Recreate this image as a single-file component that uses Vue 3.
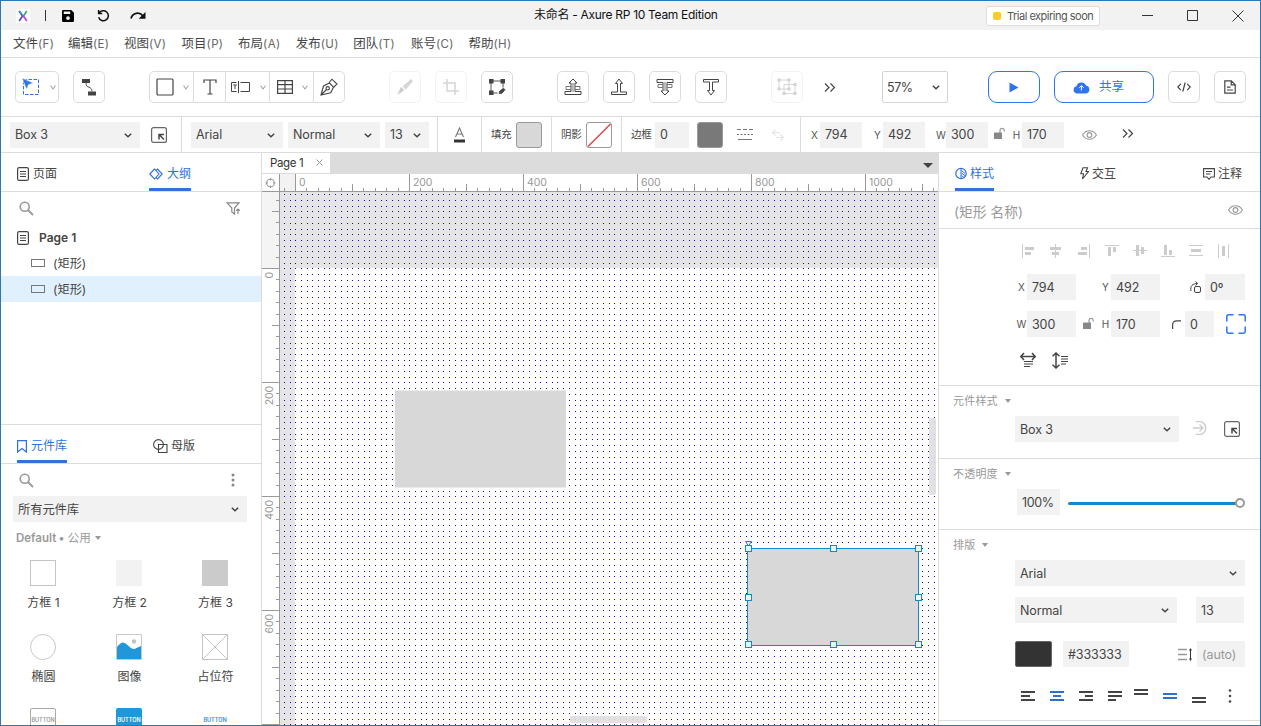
<script setup>
const menus = ['文件(F)', '编辑(E)', '视图(V)', '项目(P)', '布局(A)', '发布(U)', '团队(T)', '账号(C)', '帮助(H)']

const S = 0.57
const range = (a, b) => Array.from({ length: b - a + 1 }, (_, i) => a + i)

// Snap grid: one pixel dot every 10 units at 57% zoom.
const dotX = range(-2, 112).map(i => Math.round(15.2 + i * 5.7))
const dotY = range(-13, 80).map(i => Math.floor(76.9 + i * 5.7))
const dots = dotY.flatMap(y => dotX.map(x => `M${x} ${y}h1v1h-1z`)).join('')

// Ruler ticks: small every 20 units, medium every 100, full every 200.
const tickLen = u => (u % 200 === 0 ? 17 : u % 100 === 0 ? 7 : 3)
const hTicks = range(-1, 56).map(i => ({ u: i * 20, p: Math.round(33 + i * 20 * S), n: tickLen(i * 20) }))
const vTicks = range(-6, 40).map(i => ({ u: i * 20, p: Math.round(76 + i * 20 * S), n: tickLen(i * 20) }))
const hLabels = [0, 200, 400, 600, 800, 1000].map(u => ({ u, p: 37 + u * S }))
const vLabels = [0, 200, 400, 600].map(u => ({ u, p: 80 + u * S }))

const handles = [[0, 0], [85, 0], [170, 0], [0, 49], [170, 49], [0, 96], [85, 96], [170, 96]]
</script>

<template>
  <div class="window">
    <header class="titlebar">
      <div class="logo">
        <svg width="14" height="14" viewBox="0 0 14 14" fill="none" stroke-width="1.8">
          <path d="M3.2 2l3.4 5-3.4 5" stroke="#5a4fd0" /><path d="M10.8 2L7.4 7" stroke="#3fae7a" /><path d="M7.4 7l3.4 5" stroke="#c246c4" /><path d="M3.2 2l2 3" stroke="#3d8fe0" />
        </svg>
      </div>
      <i class="tsep"></i>
      <svg class="t-save" width="12" height="12" viewBox="0 0 12 12"><path fill="#000" fill-rule="evenodd" d="M1.2 0h8L12 2.8v8q0 1.2-1.2 1.2H1.2Q0 12 0 10.800V1.200Q0 0 1.200 0zM1.700 1.500v2.500h6.500V1.500zM6 6.200a1.900 1.900 0 100 3.800 1.900 1.900 0 000-3.800z" /></svg>
      <svg class="t-undo" width="13" height="13" viewBox="0 0 13 13" fill="none" stroke="#111" stroke-width="1.500"><path d="M1.600 1v3.600h3.600M1.900 4.400a5 5 0 11-.3 3.900" /></svg>
      <svg class="t-redo" width="16" height="9" viewBox="0 0 16 9"><path fill="none" stroke="#111" stroke-width="1.800" d="M1 7.500C2.500 1.500 9.500.5 13 5" /><path fill="#111" d="M15.500 1v6.800H8.700z" /></svg>
      <h1>未命名 - Axure RP 10 Team Edition</h1>
      <div class="trial"><i></i>Trial expiring soon</div>
      <svg class="t-min" width="11" height="11" viewBox="0 0 11 11"><path d="M0 5.500h11" stroke="#333" /></svg>
      <svg class="t-max" width="11" height="11" viewBox="0 0 11 11"><path d="M.5.5h10v10H.5z" fill="none" stroke="#333" /></svg>
      <svg class="t-close" width="12" height="12" viewBox="0 0 12 12"><path d="M.5.5l11 11M11.500.5l-11 11" stroke="#333" /></svg>
    </header>

    <nav class="menubar"><span v-for="m in menus" :key="m">{{ m.slice(0, 2) }}<b>{{ m.slice(2) }}</b></span></nav>

    <div class="toolbar">
      <div class="btn wide">
        <svg width="18" height="18" viewBox="0 0 18 18"><path d="M1.500 1.500h15v15h-15z" fill="none" stroke="#2f74ee" stroke-dasharray="3.500 1.500" /><path d="M0 0l11.500 5-5 1.700-2 4.800z" fill="#2f74ee" stroke="#fff" stroke-width=".6" /></svg>
        <svg class="car" width="6" height="5" viewBox="0 0 6 5"><path d="M.5 .5L3 4 5.500 .5" /></svg>
      </div>
      <div class="btn g14">
        <svg width="16" height="17" viewBox="0 0 16 17"><path fill="#444" d="M1 0h8v4H1zM7 12.500h8v4H7z" /><path d="M5 4c0 6 6 2.500 6 8.500" fill="none" stroke="#555" /></svg>
      </div>
      <div class="group">
        <div class="c44"><svg width="18" height="18" viewBox="0 0 18 18"><rect x="1" y="1" width="16" height="16" rx="1" fill="none" stroke="#444" stroke-width="1.200" /></svg><svg class="car" width="6" height="5" viewBox="0 0 6 5"><path d="M.5 .5L3 4 5.500 .5" /></svg></div>
        <div class="c32"><svg width="14" height="16" viewBox="0 0 14 16"><path d="M1 4V1h12v3M7 1v14M4.500 15h5" fill="none" stroke="#444" stroke-width="1.200" /></svg></div>
        <div class="c44"><svg width="20" height="14" viewBox="0 0 20 14"><path d="M5.500 2.500h-5v9h5M2.300 5h3.500M4 5v4M7.500 1v12M9.500 2.500h9v9h-9" fill="none" stroke="#444" /></svg><svg class="car" width="6" height="5" viewBox="0 0 6 5"><path d="M.5 .5L3 4 5.500 .5" /></svg></div>
        <div class="c44"><svg width="16" height="14" viewBox="0 0 16 14"><path d="M.6.6h14.800v12.800H.6zM.6 4.700h14.800M.6 9h14.800M8 .6v12.800" fill="none" stroke="#444" stroke-width="1.200" /></svg><svg class="car" width="6" height="5" viewBox="0 0 6 5"><path d="M.5 .5L3 4 5.500 .5" /></svg></div>
        <div class="c30"><svg width="18" height="18" viewBox="0 0 18 18" fill="none" stroke="#444" stroke-width="1.100"><path d="M1 17L3.500 8l6-3 4 4-2.800 5.700zM1 17l5.500-5.500M9.200 4.500L12 1.200 17 6l-3.300 3.300" /><circle cx="7.700" cy="10.300" r="1.700" /></svg></div>
      </div>
      <div class="btn faint g44"><svg width="18" height="18" viewBox="0 0 18 18"><path fill="#bbb" d="M1 17l4-8 3 3zM6.500 8.500L15 1l2 2-7 8.500z" /><path d="M5 9l3 3-5 4z" fill="#aaa" /></svg></div>
      <div class="btn faint g14"><svg width="16" height="16" viewBox="0 0 16 16"><path fill="none" stroke="#bbb" stroke-width="1.500" d="M4 0v12h12M0 4h12v12" /></svg></div>
      <div class="btn g14"><svg width="18" height="18" viewBox="0 0 18 18"><path d="M3 3h12v12H3z" fill="none" stroke="#555" /><path fill="#444" d="M1 1h4.500v4.500H1zM12.500 1H17v4.500h-4.500zM1 12.500h4.500V17H1z" /><path d="M9.500 18v-5l4-3.500h4V15l-3 3z" fill="#fff" /><path d="M11 15.500l.8-2.500 3.700-2.800 1.500 1.500-3 3.600z" fill="#444" stroke="#444" stroke-width=".8" /></svg></div>
      <div class="btn g44"><svg width="18" height="18" viewBox="0 0 18 18" fill="none" stroke="#444"><path d="M1 16.500v-3h6V5H5L9 1l4 4h-2v8.500h6v3z" /><path d="M7 8.500H2v3h5M11 8.500h5v3h-5M9 5v9" stroke="#777" /></svg></div>
      <div class="btn g14"><svg width="18" height="18" viewBox="0 0 18 18" fill="none" stroke="#444"><path d="M1.500 16.500v-2.500h6V5.500H5.500L9 1l3.500 4.500h-2V14h6v2.500z" /></svg></div>
      <div class="btn g14"><svg width="18" height="18" viewBox="0 0 18 18" fill="none" stroke="#444"><path d="M1 1.500v3h6V13H5l4 4 4-4h-2V4.500h6v-3z" /><path d="M7 6.500H2v3h5M11 6.500h5v3h-5M9 4v9" stroke="#777" /></svg></div>
      <div class="btn g14"><svg width="18" height="18" viewBox="0 0 18 18" fill="none" stroke="#444"><path d="M1.500 1.500V4h6v8.500h-2L9 17l3.500-4.500h-2V4h6V1.500z" /></svg></div>
      <div class="btn faint g44"><svg width="20" height="18" viewBox="0 0 20 18"><path d="M2 2h10v9H2zM7 6.500h11v9H7z" fill="none" stroke="#bbb" /><path fill="#b5b5b5" d="M.5.500h3v3h-3zM10.500.500h3v3h-3zM.5 9.500h3v3h-3zM16.500 5h3v3h-3zM5.500 14h3v3h-3zM16.500 14h3v3h-3zM10.500 9.500h3v3h-3z" /></svg></div>
      <svg class="more" width="12" height="9" viewBox="0 0 12 9"><path d="M1 .5l4 4-4 4M6.500 .5l4 4-4 4" /></svg>
      <div class="zoom">57%<svg class="chev" width="8" height="5" viewBox="0 0 8 5"><path d="M.8 .8L4 3.800 7.200 .8" /></svg></div>
      <div class="btn blue play"><svg width="10" height="11" viewBox="0 0 10 11"><path d="M.5.500l9 5-9 5z" fill="#2f74ee" /></svg></div>
      <div class="btn blue share"><svg width="17" height="13" viewBox="0 0 17 13"><path d="M4 12.500a3.700 3.700 0 01-.5-7.300A5 5 0 0113 4.600a4 4 0 010 7.900z" fill="#2f74ee" /><path d="M8.400 9.500V5M6.200 6.800L8.400 4.600l2.200 2.200" fill="none" stroke="#fff" /></svg><span>共享</span></div>
      <div class="btn g14"><svg width="14" height="10" viewBox="0 0 14 10" fill="none" stroke="#444" stroke-width="1.200"><path d="M3.800 1.800L.8 5l3 3.200M10.200 1.800l3 3.200-3 3.200M8.200.5L5.800 9.500" /></svg></div>
      <div class="btn g14"><svg width="12" height="14" viewBox="0 0 12 14" fill="none" stroke="#444" stroke-width="1.200"><path d="M.8.800h6.500l3.900 3.900v8.500H.8zM7.200.8v4h4M3 7.200h3.500M3 10h6" /></svg></div>
    </div>

    <div class="stylebar">
      <div class="fld s1">Box 3<svg class="chev" width="8" height="5" viewBox="0 0 8 5"><path d="M.8 .8L4 3.800 7.200 .8" /></svg></div>
      <svg class="g11" width="16" height="16" viewBox="0 0 16 16"><rect x=".6" y=".6" width="14.800" height="14.800" rx="2" fill="none" stroke="#666" stroke-width="1.200" /><path d="M8 12.500V7.500h5M8.300 7.800l4.700 4.700" fill="none" stroke="#444" stroke-width="1.500" /></svg>
      <i class="vs g14"></i>
      <div class="fld s2">Arial<svg class="chev" width="8" height="5" viewBox="0 0 8 5"><path d="M.8 .8L4 3.800 7.200 .8" /></svg></div>
      <div class="fld s3">Normal<svg class="chev" width="8" height="5" viewBox="0 0 8 5"><path d="M.8 .8L4 3.800 7.200 .8" /></svg></div>
      <div class="fld s4">13<svg class="chev" width="8" height="5" viewBox="0 0 8 5"><path d="M.8 .8L4 3.800 7.200 .8" /></svg></div>
      <i class="vs g8"></i>
      <svg class="g15" width="13" height="16" viewBox="0 0 13 16"><path d="M2.500 10L6.500 1l4 9M4 7h5" fill="none" stroke="#777" stroke-width="1.100" /><path d="M1 12.500h11v3H1z" fill="#333" /></svg>
      <i class="vs g15"></i>
      <span class="lab">填充</span><i class="sw fill"></i>
      <i class="vs g9"></i>
      <span class="lab">阴影</span><i class="sw shade"><svg width="24" height="24" viewBox="0 0 24 24"><path d="M1 23.500L23.500 1" fill="none" stroke="#e23b3b" stroke-width="1.200" /></svg></i>
      <i class="vs g9"></i>
      <span class="lab">边框</span><div class="fld s5">0</div><i class="sw line"></i>
      <svg class="g14" width="16" height="13" viewBox="0 0 16 13" stroke="#777" fill="none"><path d="M0 1.500h16" stroke-dasharray="4 2" /><path d="M0 6.500h16" stroke-dasharray="2 1.500" /><path d="M1 11.500h14" /></svg>
      <svg class="arr" width="12" height="12" viewBox="0 0 12 12" fill="none" stroke="#e4e4e4" stroke-width="1.200"><path d="M3.500 .5l-3 3 3 3M.5 3.500H8M8.500 5.500l3 3-3 3M11.500 8.500H4" /></svg>
      <i class="vs g16"></i>
      <span class="ax a1">X</span><div class="fld n">794</div>
      <span class="ax a2">Y</span><div class="fld n">492</div>
      <span class="ax a3">W</span><div class="fld n">300</div>
      <svg class="lock" width="11" height="12" viewBox="0 0 11 12"><path d="M0 5.500h8V12H0z" fill="#888" /><path d="M6 6V3.200a2.200 2.200 0 014.300 0V4.500" fill="none" stroke="#999" stroke-width="1.200" /></svg>
      <span class="ax a4">H</span><div class="fld n">170</div>
      <svg class="eye1" width="15" height="10" viewBox="0 0 15 10" fill="none" stroke="#999" stroke-width="1.100"><path d="M.6 5C3.800-.6 11.200-.6 14.400 5 11.200 10.600 3.800 10.600.6 5z" /><circle cx="7.500" cy="5" r="2.400" /></svg>
      <svg class="more2" width="12" height="9" viewBox="0 0 12 9"><path d="M1 .5l4 4-4 4M6.500 .5l4 4-4 4" /></svg>
    </div>

    <main class="body">
      <aside class="left">
        <div class="tabs outline-tabs">
          <div class="tab"><svg width="12" height="14" viewBox="0 0 12 14" fill="none" stroke="#444"><rect x=".6" y=".6" width="10.800" height="12.800" rx="1.500" stroke-width="1.200" /><path d="M3 4.500h6M3 7h6M3 9.500h6" /></svg>页面</div>
          <div class="tab on t2"><svg width="14" height="12" viewBox="0 0 14 12" fill="none" stroke="#2f6fe0" stroke-width="1.100"><path d="M5.500 1L.8 6l4.700 5L10 6zM7 2.300L8.500 1 13.200 6l-4.700 5L7 9.700" /></svg>大纲</div>
        </div>
        <div class="tools">
          <svg width="15" height="15" viewBox="0 0 15 15" fill="none" stroke="#999"><circle cx="5.700" cy="5.700" r="4.500" stroke-width="1.600" /><path d="M9 9l5 5" stroke-width="1.800" /></svg>
          <svg width="15" height="13" viewBox="0 0 15 13" fill="none" stroke="#888" stroke-width="1.200"><path d="M1 .8h12L8.500 6v6L5.800 10V6zM12 12V7M10.200 8.700L12 7l1.800 1.700" /></svg>
        </div>
        <div class="tree">
          <div class="node root"><svg width="12" height="14" viewBox="0 0 12 14" fill="none" stroke="#444"><rect x=".6" y=".6" width="10.800" height="12.800" rx="1.500" stroke-width="1.200" /><path d="M3 4.500h6M3 7h6M3 9.500h6" /></svg>Page 1</div>
          <div class="node"><i></i><span>(矩形)</span></div>
          <div class="node sel"><i></i><span>(矩形)</span></div>
        </div>
        <div class="tabs lib-tabs">
          <div class="tab on"><svg width="10" height="13" viewBox="0 0 10 13" fill="none" stroke="#2f6fe0" stroke-width="1.200"><path d="M.6.600h8.800v11.400L5 8.500.6 12z" /></svg>元件库</div>
          <div class="tab t3"><svg width="15" height="14" viewBox="0 0 15 14" fill="none" stroke="#444" stroke-width="1.100"><circle cx="5.500" cy="5.500" r="4.900" /><path d="M5.500 5.500h8.500v8H5.500z" /></svg>母版</div>
        </div>
        <div class="tools libtools">
          <svg width="15" height="15" viewBox="0 0 15 15" fill="none" stroke="#999"><circle cx="5.700" cy="5.700" r="4.500" stroke-width="1.600" /><path d="M9 9l5 5" stroke-width="1.800" /></svg>
          <svg class="dots3" width="4" height="14" viewBox="0 0 4 14" fill="#888"><circle cx="2" cy="2" r="1.500" /><circle cx="2" cy="7" r="1.500" /><circle cx="2" cy="12" r="1.500" /></svg>
        </div>
        <div class="fld libsel">所有元件库<svg class="chev" width="8" height="5" viewBox="0 0 8 5"><path d="M.8 .8L4 3.800 7.200 .8" /></svg></div>
        <div class="cat"><b>Default</b><em>•</em><span>公用</span><i class="tri"></i></div>
        <div class="lib">
          <div><i class="w box1"></i>方框 1</div>
          <div><i class="w box2"></i>方框 2</div>
          <div><i class="w box3"></i>方框 3</div>
          <div><i class="w oval"></i>椭圆</div>
          <div><svg class="w" viewBox="0 0 26 26"><path d="M.5.500h25v25H.5z" fill="#fff" stroke="#c8c8c8" /><path d="M1 13Q4.500 8.500 7 8.500q2 0 5 3 4 4 6.500 3.500 3-1.500 6.500-3V25H1z" fill="#2196d8" /><circle cx="18" cy="7.500" r="2.200" fill="#c4c4c4" /></svg>图像</div>
          <div><svg class="w" viewBox="0 0 26 26"><path d="M.5.500h25v25H.5zM.5.500l25 25M25.500.500l-25 25" fill="#fff" stroke="#c4c4c4" /></svg>占位符</div>
          <div><i class="w b b1">BUTTON</i></div>
          <div><i class="w b b2">BUTTON</i></div>
          <div><i class="w b b3">BUTTON</i></div>
        </div>
      </aside>

      <section class="center">
        <div class="pagetabs">
          <div class="ptab">Page 1<svg width="7" height="7" viewBox="0 0 7 7"><path d="M.5.500l6 6M6.500.500l-6 6" stroke="#999" /></svg></div>
          <i class="drop"></i>
        </div>
        <div class="hruler">
          <svg width="676" height="18" viewBox="0 0 676 18">
            <path d="M18 0h15v17H18z" fill="#f2f2f2" />
            <g fill="none" stroke="#999"><circle cx="8.500" cy="9" r="4" /><path d="M8.500 4v2.500M8.500 11.500V14M3.500 9H6M11 9h2.500" /></g>
            <path v-for="t in hTicks" :key="t.u" :d="`M${t.p + .5} 17v-${t.n}`" stroke="#999" />
            <path d="M0 17.500h676M17.500 0v18" stroke="#999" />
            <text v-for="l in hLabels" :key="l.u" :x="l.p" y="11.500">{{ l.u }}</text>
          </svg>
        </div>
        <div class="work">
          <svg class="vruler" width="18" height="533" viewBox="0 0 18 533">
            <path d="M0 0h17v76H0z" fill="#f4f4f4" />
            <path v-for="t in vTicks" :key="t.u" :d="`M17 ${t.p + .5}h-${t.n}`" stroke="#999" />
            <path d="M17.500 0v533" stroke="#999" />
            <text v-for="l in vLabels" :key="l.u" :transform="`translate(11 ${l.p}) rotate(-90)`" text-anchor="end">{{ l.u }}</text>
          </svg>
          <div class="canvas">
            <svg width="658" height="533" viewBox="0 0 658 533">
              <path d="M0 0h658v76H15v457H0z" fill="#e5e5e8" />
              <path :d="dots" fill="#12128e" shape-rendering="crispEdges" />
              <path d="M115 198.500h171v97H115z" fill="#d8d8d8" />
              <path d="M467.500 356.500h171v97h-171z" fill="#d8d8d8" stroke="#1489c8" />
              <path d="M465.500 349.500h6L468.500 354z" fill="#e6f6ff" stroke="#1489c8" />
              <rect v-for="(h, i) in handles" :key="i" :x="465.500 + h[0]" :y="353.500 + h[1]" width="6" height="6" fill="#e6f9ff" stroke="#1489c8" />
              <rect x="649" y="226" width="7" height="77" rx="2" fill="#dedee0" fill-opacity=".9" />
              <rect x="290" y="524" width="77" height="7" rx="2" fill="#dedee0" fill-opacity=".9" />
            </svg>
          </div>
        </div>
      </section>

      <aside class="right">
        <div class="tabs right-tabs">
          <div class="tab on"><svg width="12" height="13" viewBox="0 0 12 13" fill="none" stroke="#2f6fe0"><circle cx="6" cy="6.500" r="5.200" stroke-width="1.200" /><path d="M6 1v11M6.500 3.500l3.500 3M6.500 6l4 3M6.500 8.500l2.500 2" /></svg>样式</div>
          <div class="tab r2"><svg width="9" height="13" viewBox="0 0 9 13" fill="none" stroke="#444" stroke-width="1.100"><path d="M3 .8h4.500L6 4.500h2.400L2.500 12l1-5.200H.8z" /></svg>交互</div>
          <div class="tab r3"><svg width="12" height="12" viewBox="0 0 12 12" fill="none" stroke="#444" stroke-width="1.100"><path d="M.6.600h10.800v8.400H8l-2 2.300L4 9H.6zM3 3.500h6M3 6h4.500" /></svg>注释</div>
        </div>
        <div class="name">(矩形 名称)<svg width="15" height="10" viewBox="0 0 15 10" fill="none" stroke="#999" stroke-width="1.100"><path d="M.6 5C3.800-.6 11.200-.6 14.400 5 11.200 10.600 3.800 10.600.6 5z" /><circle cx="7.500" cy="5" r="2.400" /></svg></div>

        <div class="geo">
          <div class="aligns">
            <svg viewBox="0 0 14 14"><path d="M1.500 0v14" /><path class="f" d="M4 3h9v3H4zM4 8h6v3H4z" /></svg>
            <svg viewBox="0 0 14 14"><path d="M6.500 0v14" /><path class="f" d="M1 3h11v3H1zM3 8h7v3H3z" /></svg>
            <svg viewBox="0 0 14 14"><path d="M12.500 0v14" /><path class="f" d="M4 3h6v3H4zM1 8h9v3H1z" /></svg>
            <svg viewBox="0 0 14 14"><path d="M0 1.500h14" /><path class="f" d="M3 3h3v9H3zM8 3h3v5H8z" /></svg>
            <svg viewBox="0 0 14 14"><path d="M0 6.500h14" /><path class="f" d="M3 1h3v11H3zM8 3h3v7H8z" /></svg>
            <svg viewBox="0 0 14 14"><path d="M0 12.500h14" /><path class="f" d="M3 1h3v10H3zM8 6h3v5H8z" /></svg>
            <svg viewBox="0 0 14 14"><path d="M0 1.500h14M0 11.500h14" /><path class="f" d="M2 5h10v3H2z" /></svg>
            <svg viewBox="0 0 14 14"><path d="M1.500 0v14M11.500 0v14" /><path class="f" d="M5 2h3v10H5z" /></svg>
          </div>
          <div class="row">
            <span class="ax">X</span><div class="fld p">794</div>
            <span class="ax yy">Y</span><div class="fld p">492</div>
            <svg class="rot" width="12" height="12" viewBox="0 0 12 12" fill="none" stroke="#444"><rect x="4.500" y="5.500" width="6" height="6" rx="1.500" /><path d="M1 10C0 5 2.500 2.500 7.500 2.500M5.500 .5l2.200 2-2.200 2" /></svg>
            <div class="fld ang">0º</div>
          </div>
          <div class="row">
            <span class="ax">W</span><div class="fld p">300</div>
            <svg class="lock2" width="11" height="12" viewBox="0 0 11 12"><path d="M0 5.500h8V12H0z" fill="#888" /><path d="M6 6V3.200a2.200 2.200 0 014.300 0V4.500" fill="none" stroke="#999" stroke-width="1.200" /></svg>
            <span class="ax hh">H</span><div class="fld p">170</div>
            <svg class="rad" width="9" height="9" viewBox="0 0 9 9"><path d="M.6 9V5Q.6.800 5 .8h4" fill="none" stroke="#444" stroke-width="1.200" /></svg>
            <div class="fld r0">0</div>
            <svg class="corners" width="20" height="20" viewBox="0 0 20 20" fill="none" stroke="#2f74ee" stroke-width="1.500"><path d="M.8 7.500V2.500Q.8.800 2.500.8h5M12.500.8h5q1.700 0 1.700 1.700v5M19.200 12.500v5q0 1.700-1.700 1.700h-5M7.500 19.200h-5Q.8 19.200.8 17.500v-5" /></svg>
          </div>
          <div class="fits">
            <svg width="16" height="16" viewBox="0 0 16 16" fill="none" stroke="#444"><path d="M1 4.500h14M4 1L.8 4.500 4 8M12 1l3.200 3.500L12 8" stroke-width="1.500" /><path d="M4 9.500h9M4 12h9M4 14.500h6" /></svg>
            <svg width="16" height="17" viewBox="0 0 16 17" fill="none" stroke="#444"><path d="M4 1v15M.5 4.200L4 1l3.500 3.200M.5 12.800L4 16l3.500-3.200" stroke-width="1.500" /><path d="M9 4.500h7M9 7h7M9 9.500h7M9 12h5" /></svg>
          </div>
        </div>

        <div class="sec stylesec">
          <div class="sh">元件样式<i class="tri"></i></div>
          <div class="row">
            <div class="fld bx">Box 3<svg class="chev" width="8" height="5" viewBox="0 0 8 5"><path d="M.8 .8L4 3.800 7.200 .8" /></svg></div>
            <svg class="upd" width="15" height="16" viewBox="0 0 15 16" fill="none" stroke="#ccc" stroke-width="1.300"><path d="M3 2.200A6.600 6.600 0 113 13.800M0 8h10M6.500 4.500L10 8l-3.500 3.500" /></svg>
            <svg class="mng" width="16" height="16" viewBox="0 0 16 16"><rect x=".6" y=".6" width="14.800" height="14.800" rx="2" fill="none" stroke="#666" stroke-width="1.200" /><path d="M8 12.500V7.500h5M8.300 7.800l4.700 4.700" fill="none" stroke="#444" stroke-width="1.500" /></svg>
          </div>
        </div>

        <div class="sec opsec">
          <div class="sh">不透明度<i class="tri"></i></div>
          <div class="row"><div class="fld op">100%</div><div class="slider"><i></i></div></div>
        </div>

        <div class="sec typo">
          <div class="sh">排版<i class="tri"></i></div>
          <div class="row"><div class="fld fa">Arial<svg class="chev" width="8" height="5" viewBox="0 0 8 5"><path d="M.8 .8L4 3.800 7.200 .8" /></svg></div></div>
          <div class="row r11"><div class="fld fn">Normal<svg class="chev" width="8" height="5" viewBox="0 0 8 5"><path d="M.8 .8L4 3.800 7.200 .8" /></svg></div><div class="fld fs">13</div></div>
          <div class="row r18"><i class="ink"></i><div class="fld hex">#333333</div>
            <svg class="lh" width="15" height="13" viewBox="0 0 15 13"><path d="M0 1.500h9M0 6.500h9M0 11.500h9" stroke="#999" stroke-width="1.500" /><path d="M12.500 1v11" stroke="#333" /><path d="M11 2.500L12.500 0 14 2.500zM11 10.500l1.500 2.500 1.500-2.500z" fill="#333" /></svg>
            <div class="fld auto">(auto)</div></div>
          <div class="ta">
            <svg viewBox="0 0 14 22"><path d="M0 7h14M0 11h9M0 15h14" /></svg>
            <svg class="on" viewBox="0 0 14 22"><path d="M0 7h14M3 11h8M0 15h14" /></svg>
            <svg viewBox="0 0 14 22"><path d="M0 7h14M6 11h8M0 15h14" /></svg>
            <svg viewBox="0 0 14 22"><path d="M0 7h14M0 11h14M0 15h8" /></svg>
            <svg class="v" viewBox="0 0 14 22"><path d="M0 5h14M0 9h14" /></svg>
            <svg class="on" viewBox="0 0 14 22"><path d="M0 9h14M0 13h14" /></svg>
            <svg viewBox="0 0 14 22"><path d="M0 13h14M0 17h14" /></svg>
            <svg class="d" viewBox="0 0 14 22" fill="#444"><circle cx="7" cy="5.500" r="1.300" /><circle cx="7" cy="11" r="1.300" /><circle cx="7" cy="16.500" r="1.300" /></svg>
          </div>
        </div>
      </aside>
    </main>
  </div>
</template>

<style>
html, body { margin: 0; overflow: hidden; }
</style>

<style scoped>
* { box-sizing: border-box; }
i, em { font-style: normal; }
svg { display: block; flex: none; }
.window { width: 1261px; height: 726px; border: 1px solid #2a78b6; background: #fff; display: flex; flex-direction: column; overflow: hidden; font: 12.5px/16px Inter, "Noto Sans CJK SC", sans-serif; color: #444; white-space: nowrap; }

.titlebar { height: 29px; flex: none; background: #f2f2f2; display: flex; align-items: center; }
.logo { width: 14px; height: 14px; background: #fff; margin-left: 15px; }
.tsep { width: 1px; height: 11px; background: #333; margin-left: 15px; }
.t-save { margin-left: 16px; }
.t-undo { margin-left: 23px; }
.t-redo { margin-left: 20px; }
.titlebar h1 { margin: -2px 0 0 388px; width: 184px; flex: none; font-size: 12px; font-weight: 400; color: #111; letter-spacing: -.3px; }
.trial { margin-left: 268px; width: 114px; height: 20px; flex: none; border: 1px solid #ddd; border-radius: 3px; background: #fff; display: flex; align-items: center; font-size: 11px; letter-spacing: -.5px; color: #555; }
.trial i { width: 8px; height: 8px; border-radius: 2px; background: #fbcb2e; margin: 0 6px 0 6px; }
.t-min { margin-left: 42px; }
.t-max { margin-left: 34px; }
.t-close { margin-left: 34px; }

.menubar { height: 28px; flex: none; border-bottom: 1px solid #dcdcdc; display: flex; align-items: center; padding: 1px 0 0 12px; font-size: 12.5px; }
.menubar span { width: 57.600px; }
.menubar span:first-child { width: 55px; }
.menubar span:nth-child(2) { width: 56px; }
.menubar span:nth-child(4) { width: 56.500px; }
.menubar b { font-weight: 400; font-size: 11.500px; letter-spacing: .35px; color: #666; }

.toolbar { height: 59px; flex: none; border-bottom: 1px solid #dcdcdc; display: flex; align-items: center; padding-left: 14px; }
.btn { width: 32px; height: 32px; flex: none; border: 1px solid #dcdcdc; border-radius: 5px; display: flex; align-items: center; justify-content: center; }
.wide { width: 44px; justify-content: flex-start; padding-left: 6px; }
.wide .car { margin-left: 10px; }
.car { fill: none; stroke: #aaa; stroke-width: 1.100; }
.g8 { margin-left: 8px; }
.g9 { margin-left: 9px; }
.g11 { margin-left: 11px; }
.g14 { margin-left: 14px; }
.g15 { margin-left: 15px; }
.g16 { margin-left: 16px; }
.g44 { margin-left: 44px; }
.group { margin-left: 44px; width: 196px; height: 32px; flex: none; border: 1px solid #dcdcdc; border-radius: 5px; display: flex; }
.group > div { display: flex; align-items: center; justify-content: center; flex: none; border-right: 1px solid #dcdcdc; }
.group > div:last-child { border-right: 0; }
.c44 { width: 44px; padding-left: 1px; }
.c44 .car { margin-left: 9px; }
.c32 { width: 32px; }
.c30 { width: 30px; }
.faint { border-color: #f3f3f3; }
.faint svg { opacity: .6; }
.more { margin-left: 21px; fill: none; stroke: #444; stroke-width: 1.200; }
.more2 { margin-left: 25px; margin-top: -2px; fill: none; stroke: #444; stroke-width: 1.200; }
.zoom { margin-left: 46px; width: 66px; height: 32px; border: 1px solid #d4d4d4; border-radius: 2px; display: flex; align-items: center; justify-content: space-between; padding: 1px 7px 0 4px; flex: none; letter-spacing: -.4px; }
.chev { fill: none; stroke: #444; stroke-width: 1.500; }
.blue { border: 1.500px solid #2f74ee; border-radius: 9px; color: #2f74ee; }
.play { width: 52px; margin-left: 40px; }
.share { width: 100px; margin-left: 14px; justify-content: flex-start; padding-left: 18px; }
.share span { margin-left: 9px; }

.stylebar { height: 36px; flex: none; border-bottom: 1px solid #dcdcdc; display: flex; align-items: center; padding-left: 9px; }
.fld { height: 26px; flex: none; background: #f2f2f2; display: flex; align-items: center; justify-content: space-between; padding: 1px 8px 0 5px; font-size: 12.500px; letter-spacing: -.1px; color: #444; }
.s1 { width: 130px; }
.s2 { width: 92px; margin-left: 9px; }
.s3 { width: 92px; margin-left: 5px; }
.s4 { width: 44px; margin-left: 5px; }
.s5 { width: 34px; margin-left: 4px; }
.n { width: 42px; margin-left: 2px; }
.vs { width: 1px; height: 35px; background: #dcdcdc; flex: none; }
.lab { width: 20px; margin-left: 9px; font-size: 10.500px; letter-spacing: -.3px; padding-top: 1px; }
.sw { width: 26px; height: 26px; margin-left: 5px; border: 1px solid #999; border-radius: 3px; flex: none; }
.fill { background: #d8d8d8; }
.line { background: #797979; margin-left: 8px; }
.arr { margin-left: 19px; }
.ax { font-size: 10px; color: #555; width: 7px; flex: none; display: flex; justify-content: center; }
.a1 { margin-left: 10px; }
.a2 { margin-left: 12px; }
.a3 { margin-left: 12px; width: 8px; margin-right: 1px; }
.a3 + .n { margin-left: 0; }
.lock { margin: -4px 0 0 6px; }
.a4 { margin-left: 8px; }
.eye1 { margin-left: 18px; }

.body { flex: 1; display: flex; min-height: 0; }
.left { width: 261px; border-right: 1px solid #dcdcdc; flex: none; display: flex; flex-direction: column; overflow: hidden; }
.tabs { height: 39px; flex: none; border-bottom: 1px solid #dcdcdc; display: flex; font-size: 12px; }
.tab { height: 38px; display: flex; align-items: center; padding-top: 6px; border-bottom: 3px solid transparent; margin-left: 16px; gap: 4px; flex: none; }
.tab.on { color: #2f6fe0; border-color: #3570dc; }
.left .t2 { margin-left: 92px; }
.left .t3 { margin-left: 86px; gap: 3px; }
.tools { display: flex; height: 32px; justify-content: space-between; align-items: center; padding: 0 20px 0 18px; flex: none; }
.tree { height: 200px; flex: none; }
.node { height: 26px; display: flex; align-items: center; padding-left: 30px; font-size: 12.200px; }
.node span { padding-top: 2px; }
.node i { width: 14px; height: 8px; border: 1px solid #777; margin-right: 8px; }
.root { padding-left: 16px; font-weight: 600; font-size: 12px; gap: 10px; padding-top: 1px; }
.sel { background: #e0f1fd; }
.lib-tabs { border-top: 1px solid #dcdcdc; height: 40px; }
.lib-tabs .tab { padding-top: 7px; }
.dots3 { margin-right: 6px; }
.libsel { margin: 0 14px 0 12px; font-size: 12.300px; }
.cat { display: flex; align-items: center; height: 31px; margin-left: 15px; color: #999; font-size: 11.500px; flex: none; }
.cat b { font-weight: 600; }
.cat em { margin: 0 3px 0 2px; }
.tri { width: 0; height: 0; border: 3px solid transparent; border-top: 4px solid #999; border-bottom: 0; margin-left: 4px; }
.lib { display: grid; grid-template-columns: 86px 86px 86px; grid-auto-rows: 74px; margin-top: 7px; margin-left: -1px; font-size: 12px; }
.lib > div { display: flex; flex-direction: column; align-items: center; gap: 9px; padding-left: 1px; }
.w { width: 26px; height: 26px; flex: none; }
.lib .w { margin-left: -1px; }
.box1 { border: 1px solid #c4c4c4; }
.box2 { background: #f2f2f2; }
.box3 { background: #cbcbcb; }
.oval { border: 1.500px solid #c8c8c8; border-radius: 50%; }
.b { font-size: 5.500px; font-weight: 600; display: flex; justify-content: center; line-height: 25px; border-radius: 2px; }
.b1 { border: 1px solid #aaa; color: #999; line-height: 23px; }
.b2 { background: #2196d8; color: #fff; }
.b3 { color: #2196d8; }

.center { width: 676px; flex: none; display: flex; flex-direction: column; }
.pagetabs { height: 21px; background: #dcdcdc; display: flex; justify-content: space-between; align-items: flex-start; }
.ptab { width: 68px; height: 20px; background: #fff; display: flex; align-items: center; justify-content: space-between; padding: 0 7px 1px 8px; font-size: 11.500px; letter-spacing: -.35px; color: #333; }
.drop { border: 5px solid transparent; border-top-color: #444; border-bottom: 0; margin: 10px 5px 0 0; }
.hruler { height: 18px; flex: none; }
.hruler text, .vruler text { font-size: 10.500px; fill: #999; letter-spacing: -.1px; }
.work { flex: 1; display: flex; overflow: hidden; }

.right { flex: 1; border-left: 1px solid #dcdcdc; display: flex; flex-direction: column; }
.right .tab.on { margin-left: 16px; }
.right .r2 { margin-left: 86px; }
.right .r3 { margin-left: 87px; }
.right .tab { gap: 3px; }
.name { height: 37px; flex: none; border-bottom: 1px solid #dcdcdc; display: flex; align-items: center; justify-content: space-between; padding: 3px 17px 0 15px; color: #999; font-size: 13.800px; }
.name svg { margin-top: -4px; }
.geo { height: 157px; flex: none; border-bottom: 1px solid #dcdcdc; padding-top: 15px; }
.aligns { display: flex; gap: 14px; margin-left: 82px; }
.aligns svg { width: 14px; height: 14px; stroke: #ccc; fill: none; }
.aligns .f { fill: #ccc; stroke: none; }
.row { display: flex; align-items: center; height: 26px; }
.geo .row { padding-left: 79px; margin-top: 16px; }
.geo .row + .row { margin-top: 11px; }
.p { width: 49px; margin-left: 2px; }
.yy { margin-left: 26px; }
.rot { margin-left: 30px; }
.ang { width: 40px; margin-left: 3px; }
.lock2 { margin: -3px 0 0 7px; }
.hh { margin-left: 8px; }
.rad { margin-left: 12px; }
.r0 { width: 29px; margin-left: 4px; }
.corners { margin-left: 12px; }
.fits { display: flex; gap: 16px; margin: 15px 0 0 81px; }
.sec { border-bottom: 1px solid #dcdcdc; flex: none; }
.sh { display: flex; align-items: center; height: 30px; padding-left: 14px; font-size: 11px; color: #999; letter-spacing: .2px; }
.sh .tri { margin-left: 7px; }
.sec .row { padding-left: 76px; }
.stylesec { height: 73px; }
.bx { width: 164px; }
.upd { margin-left: 14px; margin-top: -2px; }
.mng { margin-left: 16px; }
.opsec { height: 71px; }
.opsec .row { padding-left: 78px; }
.op { width: 43px; letter-spacing: -.4px; }
.slider { width: 172px; height: 3px; background: #1489c8; margin-left: 8px; display: flex; align-items: center; justify-content: flex-end; margin-top: 2px; border-radius: 2px; }
.slider i { width: 10px; height: 10px; border: 2px solid #999; border-radius: 50%; background: #fff; margin-right: -5px; flex: none; }
.typo { height: 191px; }
.fa { width: 230px; }
.r11 { margin-top: 11px; }
.fn { width: 162px; }
.fs { width: 48px; margin-left: 19px; }
.r18 { margin-top: 18px; }
.ink { width: 37px; height: 26px; background: #333; border-radius: 2px; border: 1px solid #666; }
.hex { width: 66px; margin-left: 11px; }
.lh { margin-left: 49px; }
.auto { width: 48px; margin-left: 4px; color: #999; }
.ta { display: flex; gap: 15px; margin: 18px 0 0 82px; }
.ta svg { width: 14px; height: 22px; stroke: #444; stroke-width: 2; }
.ta .on { stroke: #2f6fd0; }
.ta .v { margin-left: -3px; }
.ta .d { stroke: none; margin-left: 2px; }
</style>
